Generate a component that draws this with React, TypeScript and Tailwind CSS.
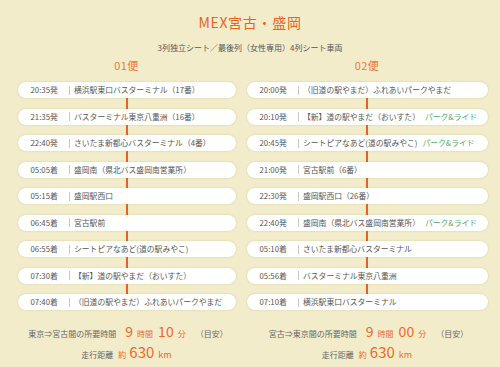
import React from 'react';

type Stop = { time: string; place: string; park?: boolean };

const outbound: Stop[] = [
  { time: '20:35発', place: '横浜駅東口バスターミナル（17番）' },
  { time: '21:35発', place: 'バスターミナル東京八重洲（16番）' },
  { time: '22:40発', place: 'さいたま新都心バスターミナル（4番）' },
  { time: '05:05着', place: '盛岡南（県北バス盛岡南営業所）' },
  { time: '05:15着', place: '盛岡駅西口' },
  { time: '06:45着', place: '宮古駅前' },
  { time: '06:55着', place: 'シートピアなあど(道の駅みやこ)' },
  { time: '07:30着', place: '【新】道の駅やまだ（おいすた）' },
  { time: '07:40着', place: '（旧道の駅やまだ）ふれあいパークやまだ' },
];

const inbound: Stop[] = [
  { time: '20:00発', place: '（旧道の駅やまだ）ふれあいパークやまだ' },
  { time: '20:10発', place: '【新】道の駅やまだ（おいすた）', park: true },
  { time: '20:45発', place: 'シートピアなあど(道の駅みやこ)', park: true },
  { time: '21:00発', place: '宮古駅前（6番）' },
  { time: '22:30発', place: '盛岡駅西口（26番）' },
  { time: '22:40発', place: '盛岡南（県北バス盛岡南営業所）', park: true },
  { time: '05:10着', place: 'さいたま新都心バスターミナル' },
  { time: '05:56着', place: 'バスターミナル東京八重洲' },
  { time: '07:10着', place: '横浜駅東口バスターミナル' },
];

const Column = ({
  label,
  stops,
  width,
  route,
  hours,
  mins,
}: {
  label: string;
  stops: Stop[];
  width: string;
  route: string;
  hours: string;
  mins: string;
}) => (
  <div className={`flex flex-col items-center ${width}`}>
    <div className="flex h-[14px] items-center text-[11px] leading-none text-[#ee7a3c] tracking-[0.04em]">{label}</div>
    <div className="mt-[10px] flex w-full flex-col items-center">
      {stops.map((s, i) => (
        <React.Fragment key={i}>
          {i > 0 && <div className="h-[10.5px] w-[2px] bg-[#e8641c]" />}
          <div className="flex h-[16px] w-full items-center rounded-full bg-white pl-[13px] text-[7.8px] leading-none text-[#555] shadow-[0_0_2px_rgba(120,100,40,0.25)]">
            <span className="w-[29px] whitespace-nowrap">{s.time}</span>
            <span className="ml-[9px] mr-[4.5px] h-[9px] w-px bg-[#c8c8c8]" />
            <span className="whitespace-nowrap">
              {s.place}
              {s.park && <span className="ml-[5px] text-[#4fb06a]">パーク&amp;ライド</span>}
            </span>
          </div>
        </React.Fragment>
      ))}
    </div>
    <div className="mt-[14px] flex h-[16px] items-baseline whitespace-nowrap pl-[3px] text-[8px] leading-none text-[#666]">
      <span>{route}</span>
      <span className="ml-[9px] text-[14px] text-[#ec6a26]">{hours}</span>
      <span className="ml-[4px] text-[#ec6a26]">時間</span>
      <span className="ml-[5px] text-[14px] text-[#ec6a26]">{mins}</span>
      <span className="ml-[4px] text-[#ec6a26]">分</span>
      <span className="ml-[10px]">（目安）</span>
    </div>
    <div className="mt-[4px] flex h-[18px] items-baseline whitespace-nowrap text-[8px] leading-none text-[#666]">
      <span>走行距離</span>
      <span className="ml-[5px] text-[#ec6a26]">約</span>
      <span className="ml-[3px] text-[15px] text-[#ec6a26]">630</span>
      <span className="ml-[4px] text-[9px] text-[#ec6a26]">km</span>
    </div>
  </div>
);

const App: React.FC = () => {
  return (
    <div
      className="flex h-[367px] w-[500px] flex-col overflow-hidden bg-[#f3ecca] pt-[12px]"
      style={{ fontFamily: '"Noto Sans CJK JP", "Noto Sans", sans-serif' }}
    >
      <h1 className="flex h-[20px] items-center justify-center text-[14px] leading-none tracking-[0.05em] text-[#e8641e]">
        MEX宮古・盛岡
      </h1>
      <p className="mt-[10px] flex h-[12px] items-center justify-center text-[8px] leading-none text-[#555]">
        3列独立シート／最後列（女性専用）4列シート車両
      </p>
      <div className="mt-[4px] flex gap-[11px] pl-[17.5px]">
        <Column
          label="01便"
          stops={outbound}
          width="w-[218px]"
          route="東京⇒宮古間の所要時間"
          hours="9"
          mins="10"
        />
        <Column
          label="02便"
          stops={inbound}
          width="w-[241px]"
          route="宮古⇒東京間の所要時間"
          hours="9"
          mins="00"
        />
      </div>
    </div>
  );
};

export default App;
